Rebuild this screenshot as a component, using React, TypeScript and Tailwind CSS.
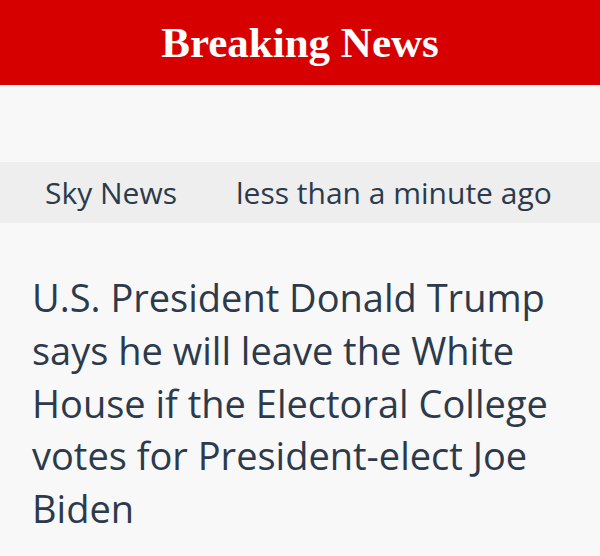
export default function App() {
  return (
    <main className="min-h-[556px] bg-[#f8f8f9]">
      <header className="h-[85px] bg-[#d60000] flex items-center justify-center">
        <h1 className="text-white font-bold text-[43px] leading-none font-['Liberation_Serif',serif] -mt-[1px]">
          Breaking News
        </h1>
      </header>

      <div className="h-[77px]" />

      <div className="h-[61px] bg-[#eeeeef] flex items-center pl-[45px] gap-[59px] text-[30px] text-[#2c3a4b] font-['Open_Sans',sans-serif]">
        <span>Sky News</span>
        <span>less than a minute ago</span>
      </div>

      <p className="pt-[48px] pl-[32px] pr-[20px] text-[38px] leading-[52.8px] text-[#2c3a4b] font-['Open_Sans',sans-serif]">
        U.S. President Donald Trump says he will leave the White House if the Electoral College votes for President-elect Joe Biden
      </p>
    </main>
  );
}
